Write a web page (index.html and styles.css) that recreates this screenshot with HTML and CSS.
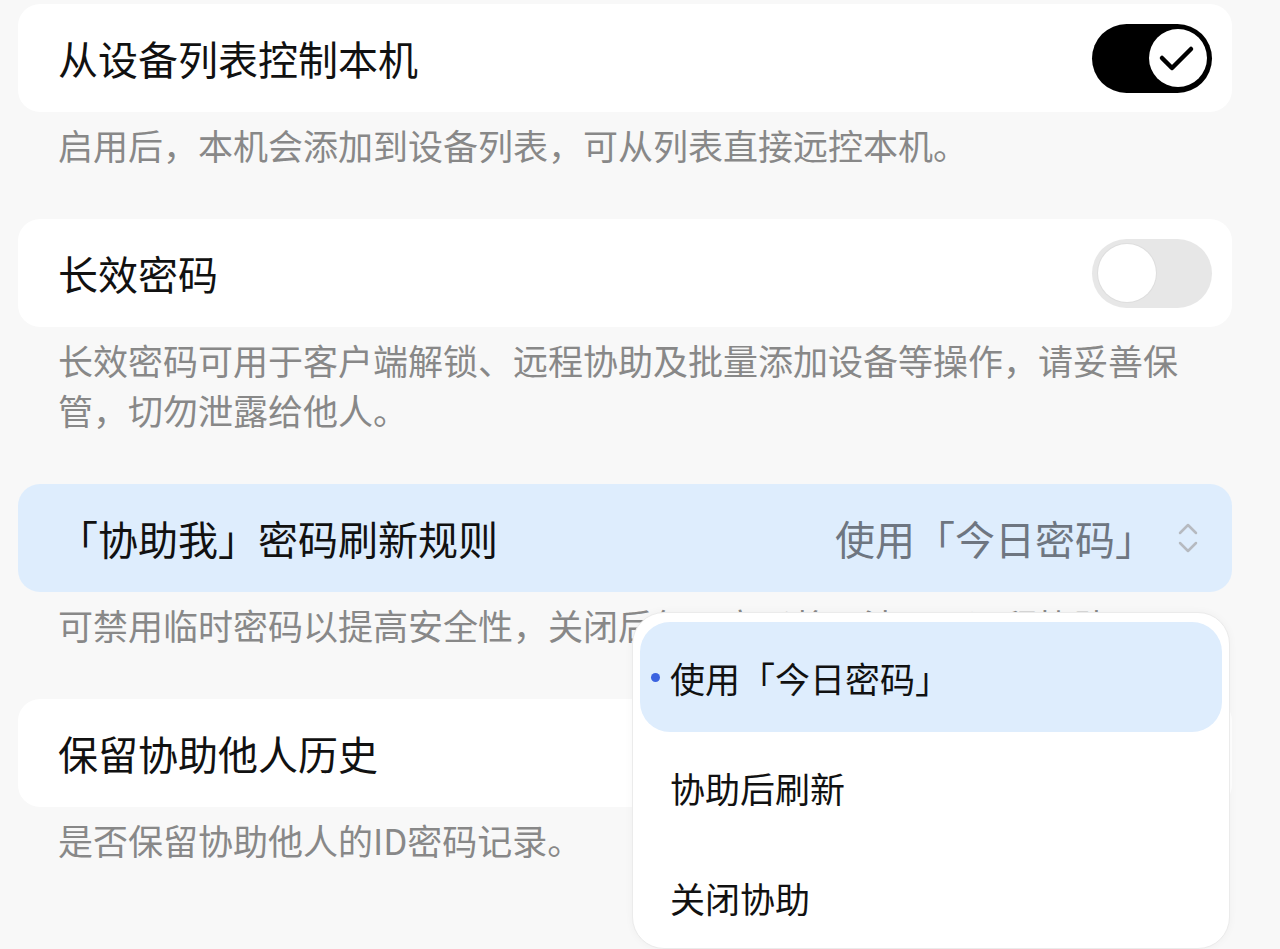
FILE: index.html
```html
<!DOCTYPE html>
<html lang="zh-CN">
<head>
  <meta charset="UTF-8" />
  <meta name="viewport" content="width=device-width, initial-scale=1.0"/>
  <title>安全设置</title>
  <link rel="stylesheet" href="styles.css">
</head>
<body>
  <main class="settings">
    <section class="group">
      <div class="row">
        <span class="row-title">从设备列表控制本机</span>
        <span class="switch switch-on">
          <span class="knob">
            <svg width="58" height="58" viewBox="0 0 58 58"><polyline points="13,29 23,39 42,20" fill="none" stroke="#000" stroke-width="4.5" stroke-linecap="round" stroke-linejoin="round"/></svg>
          </span>
        </span>
      </div>
      <p class="hint">启用后，本机会添加到设备列表，可从列表直接远控本机。</p>
    </section>

    <section class="group">
      <div class="row">
        <span class="row-title">长效密码</span>
        <span class="switch"><span class="knob"></span></span>
      </div>
      <p class="hint">长效密码可用于客户端解锁、远程协助及批量添加设备等操作，请妥善保管，切勿泄露给他人。</p>
    </section>

    <section class="group">
      <div class="row row-select">
        <span class="row-title">「协助我」密码刷新规则</span>
        <span class="select-value">
          使用「今日密码」
          <svg class="chevrons" width="20" height="32" viewBox="0 0 20 32"><polyline points="2,11 10,3 18,11" fill="none" stroke="#b6bac0" stroke-width="2.5" stroke-linecap="round" stroke-linejoin="round"/><polyline points="2,21 10,29 18,21" fill="none" stroke="#b6bac0" stroke-width="2.5" stroke-linecap="round" stroke-linejoin="round"/></svg>
        </span>
      </div>
      <p class="hint">可禁用临时密码以提高安全性，关闭后每日密码将无法用于远程协助。</p>
    </section>

    <section class="group">
      <div class="row">
        <span class="row-title">保留协助他人历史</span>
      </div>
      <p class="hint">是否保留协助他人的ID密码记录。</p>
    </section>

    <div class="menu">
      <div class="menu-item active">使用「今日密码」</div>
      <div class="menu-item">协助后刷新</div>
      <div class="menu-item">关闭协助</div>
    </div>
  </main>
</body>
</html>
```

FILE: styles.css
```css
* { box-sizing: border-box; }
body {
  margin: 0;
  background-color: #f8f8f8;
  color: #111111;
  font-family: "Noto Sans CJK SC", "Noto Sans", sans-serif;
}
.settings {
  position: relative;
  padding: 4px 48px 0 18px;
  height: 949px;
  overflow: hidden;
}
.row {
  display: flex;
  align-items: center;
  justify-content: space-between;
  height: 108px;
  padding: 0 20px 0 40px;
  background: #ffffff;
  border-radius: 22px;
}
.row-title {
  font-size: 40px;
  line-height: 1;
  color: #111111;
}
.hint {
  margin: 0;
  padding: 8px 40px 49px;
  font-size: 35px;
  line-height: 50px;
  color: #888888;
}
.row-select {
  background: #deedfd;
  padding-right: 34px;
}
.select-value {
  display: flex;
  align-items: center;
  gap: 23px;
  font-size: 40px;
  line-height: 1;
  color: #6e7681;
}
.switch {
  display: flex;
  align-items: center;
  width: 120px;
  height: 69px;
  padding: 0 6px;
  border-radius: 35px;
  background: #e7e7e7;
}
.switch .knob {
  width: 58px;
  height: 58px;
  border-radius: 50%;
  background: #ffffff;
  box-shadow: 0 0 0 1px #dedede;
}
.switch-on {
  background: #000000;
  justify-content: flex-end;
  padding: 0 5px;
}
.switch-on .knob {
  box-shadow: none;
}
.switch-on svg { display: block; }
.menu {
  position: absolute;
  left: 632px;
  top: 612px;
  width: 598px;
  height: 337px;
  padding: 9px 7px 0;
  background: #ffffff;
  border: 1px solid #ebebeb;
  border-radius: 32px;
  box-shadow: 0 0 8px rgba(0, 0, 0, 0.04);
  overflow: hidden;
}
.menu-item {
  position: relative;
  display: flex;
  align-items: center;
  height: 110px;
  padding-left: 30px;
  font-size: 35px;
  line-height: 1;
  color: #111111;
  border-radius: 30px;
}
.menu-item.active {
  background: #deedfd;
}
.menu-item.active::before {
  content: "";
  position: absolute;
  left: 11px;
  top: 51px;
  width: 9px;
  height: 9px;
  border-radius: 50%;
  background: #3b63e0;
}
```
